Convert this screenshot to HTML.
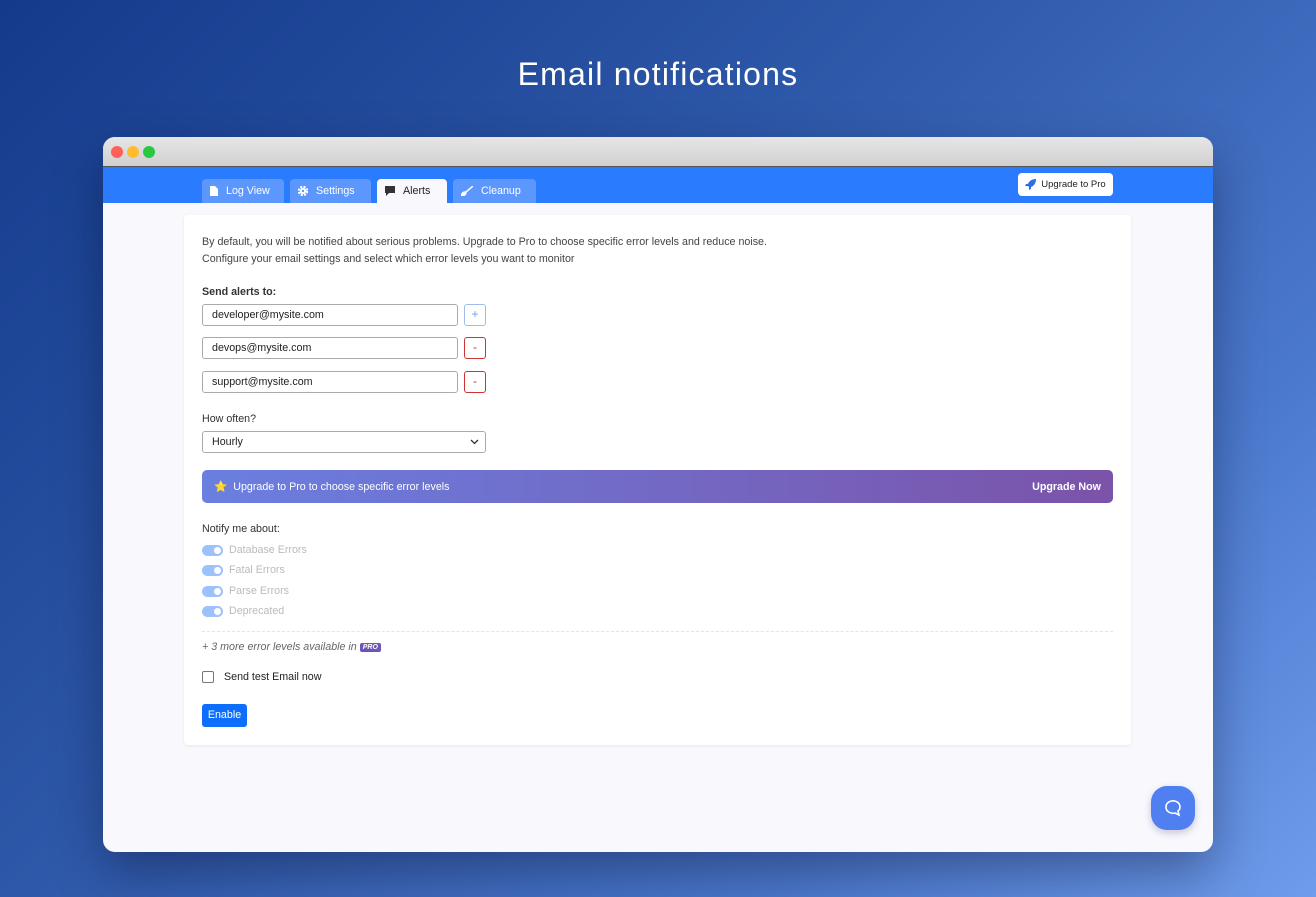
<!DOCTYPE html>
<html><head><style>
*{box-sizing:border-box;margin:0;padding:0}
body{width:1316px;height:897px;overflow:hidden;font-family:"Liberation Sans",sans-serif;background:linear-gradient(135deg,#143a8c 0%,#2d57a8 40%,#4a78cc 75%,#6f9cec 100%);position:relative}
.title{position:absolute;top:56px;width:100%;text-align:center;color:#fff;font-size:32px;font-weight:300;letter-spacing:1.2px}
.win{position:absolute;left:103px;top:137px;width:1110px;height:715px;border-radius:12px;overflow:hidden;background:#f8f8fd;box-shadow:0 20px 50px rgba(0,0,30,.35)}
.bar{height:30px;background:linear-gradient(#e6e6e6,#d0d0d0);border-bottom:1px solid #555}
.dot{position:absolute;top:9px;width:12px;height:12px;border-radius:50%}
.nav{height:36px;background:#2b7bfe;position:relative}
.tab{position:absolute;top:12px;height:24px;background:#5c97fd;color:#fff;font-size:10.7px;border-radius:4px 4px 0 0;display:flex;align-items:center;padding-left:8px;gap:8px}
.tab.a{background:#f8f8fd;color:#222}
.upg{position:absolute;left:915px;top:6px;width:95px;height:23px;background:#fff;border-radius:4px;font-size:9.5px;color:#222;display:flex;align-items:center;justify-content:center;gap:5px}
.card{position:absolute;left:81px;top:78px;width:947px;height:530px;background:#fff;border-radius:4px;box-shadow:0 1px 3px rgba(0,0,0,.08);padding:0 18px;font-size:10.7px;color:#333}
.abs{position:absolute}
.inp{position:absolute;left:18px;width:256px;height:22px;border:1px solid #aaa;border-radius:3px;padding-left:9px;font-size:10.7px;line-height:20px;color:#222}
.btn{position:absolute;left:280px;width:22px;height:22px;border:1px solid #c33;border-radius:3px;color:#c33;text-align:center;line-height:19px;font-size:12px}
.tg{position:absolute;left:18px;width:21px;height:11px;border-radius:6px;background:#9dc1fb}
.tg::after{content:"";position:absolute;right:2px;top:2px;width:7px;height:7px;border-radius:50%;background:#fff}
.tl{position:absolute;left:45px;color:#bbb;font-size:10.7px}
</style></head><body>
<div class="title">Email notifications</div>
<div class="win">
<div class="bar"></div>
<div class="dot" style="left:8px;background:#fe5f57"></div>
<div class="dot" style="left:24px;background:#febc2e"></div>
<div class="dot" style="left:40px;background:#28c840"></div>
<div class="nav">
<div class="tab" style="left:99px;width:82px"><svg width="8" height="10"><path d="M0 0h5l3 3v7H0z" fill="#fff"/></svg>Log View</div>
<div class="tab" style="left:187px;width:81px"><svg width="10" height="10"><circle cx="5" cy="5" r="4" fill="none" stroke="#fff" stroke-width="2.5" stroke-dasharray="2 1.2"/><circle cx="5" cy="5" r="3" fill="#fff"/><circle cx="5" cy="5" r="1.2" fill="#5c97fd"/></svg>Settings</div>
<div class="tab a" style="left:274px;width:70px"><svg width="10" height="10"><path d="M0 0h10v7H4l-3 3V7H0z" fill="#333"/></svg>Alerts</div>
<div class="tab" style="left:350px;width:83px"><svg width="12" height="10"><path d="M12 0L5 6M0 10c1-3 2-4 4-4l1 1c-1 2-2 3-5 3z" stroke="#fff" fill="#fff" stroke-width="1.5"/></svg>Cleanup</div>
<div class="upg"><svg width="11" height="11"><path d="M11 0C7 0 4 2 3 5L1 5 0 7l3 0 1 1 0 3 2-1 0-2c3-1 5-4 5-8z" fill="#2b6fe8"/></svg>Upgrade to Pro</div>
</div>
<div class="card">
<div class="abs" style="left:18px;top:19px;line-height:17px;color:#444">By default, you will be notified about serious problems. Upgrade to Pro to choose specific error levels and reduce noise.<br>Configure your email settings and select which error levels you want to monitor</div>
<div class="abs" style="left:18px;top:71px;font-weight:bold;color:#333">Send alerts to:</div>
<div class="inp" style="top:89px">developer@mysite.com</div>
<div class="btn" style="top:89px;border-color:#9cbcf0;color:#6d9cf0">+</div>
<div class="inp" style="top:122px">devops@mysite.com</div>
<div class="btn" style="top:122px">-</div>
<div class="inp" style="top:156px">support@mysite.com</div>
<div class="btn" style="top:156px">-</div>
<div class="abs" style="left:18px;top:198px">How often?</div>
<div class="inp" style="top:216px;width:284px">Hourly<svg class="abs" style="right:6px;top:7px" width="9" height="6"><path d="M1 1l3.5 3.5L8 1" stroke="#333" fill="none" stroke-width="1.3"/></svg></div>
<div class="abs" style="left:18px;top:255px;width:911px;height:33px;border-radius:5px;background:linear-gradient(90deg,#6a7fe0,#7b53a9);color:#fff;display:flex;align-items:center;padding:0 12px;justify-content:space-between"><span>⭐&nbsp; Upgrade to Pro to choose specific error levels</span><b>Upgrade Now</b></div>
<div class="abs" style="left:18px;top:308px">Notify me about:</div>
<div class="tg" style="top:330px"></div><div class="tl" style="top:329px">Database Errors</div>
<div class="tg" style="top:350px"></div><div class="tl" style="top:349px">Fatal Errors</div>
<div class="tg" style="top:371px"></div><div class="tl" style="top:370px">Parse Errors</div>
<div class="tg" style="top:391px"></div><div class="tl" style="top:390px">Deprecated</div>
<div class="abs" style="left:18px;top:416px;width:911px;border-top:1px dashed #e4e4e4"></div>
<div class="abs" style="left:18px;top:426px;font-style:italic;color:#666">+ 3 more error levels available in <span style="font-style:italic;font-weight:bold;font-size:7px;background:#6d55b8;color:#fff;padding:1px 3px;border-radius:2px;vertical-align:1px">PRO</span></div>
<div class="abs" style="left:18px;top:456px;width:12px;height:12px;border:1px solid #777;border-radius:2px"></div>
<div class="abs" style="left:40px;top:456px;color:#222">Send test Email now</div>
<div class="abs" style="left:18px;top:489px;width:45px;height:23px;background:#0d6efd;border-radius:3px;color:#fff;text-align:center;line-height:22px">Enable</div>
</div>
<div class="abs" style="left:1048px;top:649px;width:44px;height:44px;border-radius:16px;background:#4f7ff0;box-shadow:0 3px 8px rgba(0,0,80,.2)"><svg width="44" height="44"><path d="M15 21a7 6 0 1 1 12 4l1 4-4-2a7 6 0 0 1-9-6z" fill="none" stroke="#fff" stroke-width="1.6"/></svg></div>
</div>
</body></html>
